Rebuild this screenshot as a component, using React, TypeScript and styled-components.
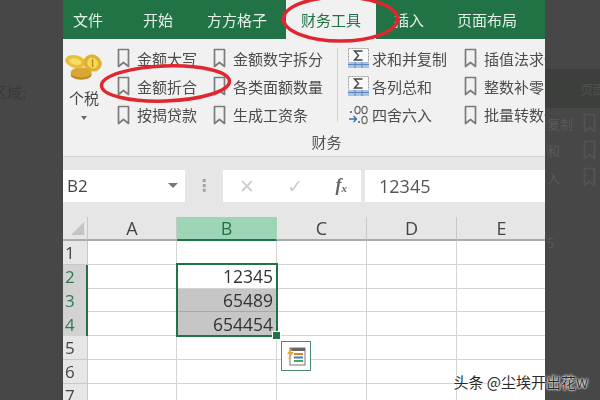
import styled, {createGlobalStyle} from 'styled-components';

const TABS = [
  {label: '文件', gap: 10},
  {label: '开始', gap: 40},
  {label: '方方格子', gap: 34},
  {label: '财务工具', gap: 19},
  {label: '插入', gap: 18},
  {label: '页面布局', gap: 33},
];
const COLUMNS = ['A', 'B', 'C', 'D', 'E'];
const ROWS = [1, 2, 3, 4, 5, 6, 7];
const VALUES: Record<number, string> = {2: '12345', 3: '65489', 4: '654454'};

const GlobalStyle = createGlobalStyle`
  html, body {
    margin: 0;
    padding: 0;
    width: 600px;
    height: 400px;
    overflow: hidden;
    background: #474747;
    font-family: "Noto Sans CJK SC", "Liberation Sans", sans-serif;
  }
`;

function Bookmark({color = '#7b7b7b'}: {color?: string}) {
  return (
    <svg width="13" height="20" viewBox="0 0 13 20" fill="none" style={{flexShrink: 0}}>
      <path d="M1.5 1.5h10v17l-5-4-5 4z" stroke={color} strokeWidth="1.7" strokeLinejoin="round" />
    </svg>
  );
}

function SigmaIcon() {
  return (
    <svg width="21" height="20" viewBox="0 0 21 20" style={{flexShrink: 0}}>
      <rect x="0.5" y="0.5" width="20" height="19" fill="#f8f8f8" stroke="#9a9a9a" strokeDasharray="2 1" />
      <rect x="0" y="14" width="21" height="6" fill="#a9c3e0" />
      <path d="M0 16.5h21M7 14v6M14 14v6" stroke="#5b87bd" strokeWidth="1" />
      <path d="M14.5 3H6.5l4 4.5-4 4.5h8" fill="none" stroke="#444" strokeWidth="1.4" />
    </svg>
  );
}

function RoundIcon() {
  return (
    <svg width="21" height="20" viewBox="0 0 21 20" style={{flexShrink: 0}}>
      <circle cx="3" cy="7" r="1" fill="#555" />
      <ellipse cx="9.5" cy="5" rx="2.6" ry="3.6" fill="none" stroke="#666" strokeWidth="1.2" />
      <ellipse cx="16.5" cy="5" rx="2.6" ry="3.6" fill="none" stroke="#666" strokeWidth="1.2" />
      <circle cx="11" cy="17" r="1" fill="#555" />
      <ellipse cx="16.5" cy="15" rx="2.6" ry="3.6" fill="none" stroke="#666" strokeWidth="1.2" />
      <path d="M1 14h7M5.5 11l3 3-3 3" fill="none" stroke="#2f75b5" strokeWidth="1.4" />
    </svg>
  );
}

function Coins() {
  return (
    <svg width="40" height="28" viewBox="0 0 42 36" preserveAspectRatio="none">
      <ellipse cx="18" cy="28" rx="11" ry="6.5" fill="#b98a22" />
      <ellipse cx="18" cy="25" rx="11" ry="6.5" fill="#d8a734" />
      <ellipse cx="12" cy="11" rx="11" ry="8" fill="#e8bf3c" transform="rotate(20 12 11)" />
      <ellipse cx="12" cy="11" rx="6.5" ry="4" fill="#f6dc6a" transform="rotate(20 12 11)" />
      <ellipse cx="30" cy="13" rx="9.5" ry="11" fill="#e0b030" transform="rotate(-15 30 13)" />
      <ellipse cx="30" cy="13" rx="5.5" ry="7" fill="#f5d858" transform="rotate(-15 30 13)" />
      <path d="M30 8v10" stroke="#b98a22" strokeWidth="1.5" />
    </svg>
  );
}

function FlashFill() {
  return (
    <svg width="20" height="20" viewBox="0 0 20 20">
      <rect x="4" y="2" width="15" height="17" fill="#fff" stroke="#777" />
      <rect x="4" y="2" width="15" height="3" fill="#666" />
      <path d="M8 8h9" stroke="#d9862b" strokeWidth="2" />
      <path d="M8 11.500h9" stroke="#3d7fc4" strokeWidth="2" />
      <path d="M8 15h9" stroke="#4aa564" strokeWidth="2" />
      <path d="M6 1L1 8h3l-2 6 6-8H5z" fill="#f0a630" />
    </svg>
  );
}

export default function App() {
  return (
    <Page>
      <GlobalStyle />
      <LeftDim>区域;</LeftDim>

      <Excel>
        <TabBar>
          {TABS.map((tab, i) => (
            <Tab key={tab.label} $active={i === 3} $gap={tab.gap}>
              {tab.label}
            </Tab>
          ))}
        </TabBar>

        <Ribbon>
          <RibbonBody>
            <TaxButton>
              <Coins />
              <TaxLabel>个税</TaxLabel>
              <Caret />
            </TaxButton>
            <ToolColumn $width={96}>
              <Tool><Bookmark /><ToolText>金额大写</ToolText></Tool>
              <Tool><Bookmark /><ToolText>金额折合</ToolText></Tool>
              <Tool><Bookmark /><ToolText>按揭贷款</ToolText></Tool>
            </ToolColumn>
            <ToolColumn $width={123}>
              <Tool><Bookmark /><ToolText>金额数字拆分</ToolText></Tool>
              <Tool><Bookmark /><ToolText>各类面额数量</ToolText></Tool>
              <Tool><Bookmark /><ToolText>生成工资条</ToolText></Tool>
            </ToolColumn>
            <RibbonDivider />
            <ToolColumn $width={116}>
              <Tool $gap={3}><SigmaIcon /><ToolText>求和并复制</ToolText></Tool>
              <Tool $gap={3}><SigmaIcon /><ToolText>各列总和</ToolText></Tool>
              <Tool $gap={3}><RoundIcon /><ToolText>四舍六入</ToolText></Tool>
            </ToolColumn>
            <ToolColumn $width={82}>
              <Tool><Bookmark /><ToolText>插值法求值</ToolText></Tool>
              <Tool><Bookmark /><ToolText>整数补零</ToolText></Tool>
              <Tool><Bookmark /><ToolText>批量转数值</ToolText></Tool>
            </ToolColumn>
          </RibbonBody>
          <GroupLabel>财务</GroupLabel>
        </Ribbon>

        <FormulaBar>
          <NameBox>
            B2
            <NameCaret />
          </NameBox>
          <Grip>⋮</Grip>
          <FormulaButtons>
            <FormulaGlyph>✕</FormulaGlyph>
            <FormulaGlyph>✓</FormulaGlyph>
            <FxGlyph>f<sub>x</sub></FxGlyph>
          </FormulaButtons>
          <FormulaInput>12345</FormulaInput>
        </FormulaBar>

        <Sheet>
          <Corner><CornerMark /></Corner>
          {COLUMNS.map((col) => (
            <ColumnHead key={col} $selected={col === 'B'}>{col}</ColumnHead>
          ))}
          {ROWS.map((row) => (
            <SheetRow key={row}>
              <RowHead $selected={row >= 2 && row <= 4}>{row}</RowHead>
              {COLUMNS.map((col) => (
                <Cell key={col} $shaded={col === 'B' && (row === 3 || row === 4)}>
                  {col === 'B' ? VALUES[row] : ''}
                </Cell>
              ))}
            </SheetRow>
          ))}
          <Selection><FillHandle /></Selection>
          <QuickButton><FlashFill /></QuickButton>
        </Sheet>
      </Excel>

      <RightDim>
        <DimBand>页面</DimBand>
        <DimRow>复制<Bookmark color="#535353" /></DimRow>
        <DimRow>和<Bookmark color="#535353" /></DimRow>
        <DimRow>入<Bookmark color="#535353" /></DimRow>
        <DimNumber>5</DimNumber>
      </RightDim>

      <Marks width="600" height="400" viewBox="0 0 600 400">
        <ellipse cx="340.500" cy="19" rx="57" ry="22" fill="none" stroke="#e0262e" strokeWidth="3.5" />
        <ellipse cx="165.500" cy="83.500" rx="64" ry="17.500" fill="none" stroke="#e0262e" strokeWidth="3.5" transform="rotate(-2 165 84)" />
      </Marks>
      <Watermark>头条 @尘埃开出花w</Watermark>
    </Page>
  );
}

const Page = styled.div`
  position: relative;
  display: flex;
  width: 600px;
  height: 400px;
  overflow: hidden;
  background: #474747;
`;

const LeftDim = styled.div`
  width: 63px;
  flex-shrink: 0;
  padding-top: 80px;
  text-indent: -8px;
  color: #3a3a3a;
  font-size: 15px;
  line-height: 24px;
  white-space: nowrap;
  overflow: hidden;
  box-sizing: border-box;
`;

const Excel = styled.div`
  width: 482px;
  flex-shrink: 0;
  display: flex;
  flex-direction: column;
  background: #fff;
  filter: blur(0.4px);
`;

const TabBar = styled.div`
  display: flex;
  height: 39px;
  background: #217346;
  flex-shrink: 0;
`;

const Tab = styled.div<{$active: boolean; $gap: number}>`
  margin-left: ${(p) => p.$gap}px;
  padding: 0 ${(p) => (p.$active ? 15 : 0)}px;
  display: flex;
  align-items: center;
  justify-content: center;
  font-size: 15px;
  color: ${(p) => (p.$active ? '#217346' : '#e4f0e9')};
  background: ${(p) => (p.$active ? '#f1f1f1' : 'transparent')};
`;

const Ribbon = styled.div`
  height: 118px;
  flex-shrink: 0;
  background: #f1f1f1;
  border-bottom: 1px solid #d4d4d4;
  box-sizing: border-box;
  overflow: hidden;
`;

const RibbonBody = styled.div`
  display: flex;
  height: 90px;
  padding-top: 5px;
  box-sizing: border-box;
`;

const TaxButton = styled.div`
  width: 54px;
  flex-shrink: 0;
  display: flex;
  flex-direction: column;
  align-items: center;
  padding: 9px 13px 0 1px;
  box-sizing: border-box;
`;

const TaxLabel = styled.div`
  margin-top: 7px;
  font-size: 15px;
  line-height: 20px;
  color: #444;
  white-space: nowrap;
`;

const Caret = styled.div`
  margin-top: 8px;
  width: 0;
  height: 0;
  border-left: 3.5px solid transparent;
  border-right: 3.5px solid transparent;
  border-top: 4px solid #666;
`;

const ToolColumn = styled.div<{$width: number}>`
  width: ${(p) => p.$width}px;
  flex-shrink: 0;
  display: flex;
  flex-direction: column;
  overflow: hidden;
`;

const Tool = styled.div<{$gap?: number}>`
  display: flex;
  align-items: center;
  gap: ${(p) => p.$gap ?? 7}px;
  height: 28.500px;
  white-space: nowrap;
`;

const ToolText = styled.span`
  font-size: 15px;
  color: #4c4c4c;
`;

const RibbonDivider = styled.div`
  width: 1px;
  height: 74px;
  margin: 4px 10px 0 1px;
  background: #d2d2d2;
  flex-shrink: 0;
`;

const GroupLabel = styled.div`
  text-align: center;
  padding-left: 45px;
  font-size: 15px;
  line-height: 20px;
  margin-top: 3px;
  color: #555;
`;

const FormulaBar = styled.div`
  height: 60px;
  flex-shrink: 0;
  display: flex;
  align-items: center;
  background: #e6e6e6;
  padding-bottom: 3px;
  box-sizing: border-box;
`;

const NameBox = styled.div`
  position: relative;
  width: 122px;
  height: 32px;
  flex-shrink: 0;
  background: #fff;
  box-sizing: border-box;
  padding-left: 4px;
  font: 17px/32px "Open Sans", "Liberation Sans", sans-serif;
  color: #444;
`;

const NameCaret = styled.div`
  position: absolute;
  right: 7px;
  top: 13px;
  border-left: 5px solid transparent;
  border-right: 5px solid transparent;
  border-top: 5px solid #777;
`;

const Grip = styled.div`
  width: 38px;
  flex-shrink: 0;
  text-align: center;
  color: #a0a0a0;
  font: bold 16px "DejaVu Sans", sans-serif;
`;

const FormulaButtons = styled.div`
  width: 138px;
  height: 32px;
  flex-shrink: 0;
  background: #fff;
  display: flex;
  align-items: center;
  justify-content: space-between;
  padding: 0 14px 0 16px;
  box-sizing: border-box;
`;

const FormulaGlyph = styled.span`
  font: bold 19px "DejaVu Sans", sans-serif;
  color: #cdcdcd;
`;

const FxGlyph = styled.span`
  font: italic bold 18px "Liberation Serif", serif;
  color: #666;
  sub {
    font-size: 11px;
    vertical-align: -1px;
  }
`;

const FormulaInput = styled.div`
  margin-left: 4px;
  flex: 1;
  height: 32px;
  background: #fff;
  padding-left: 14px;
  font: 18px/32px "Open Sans", "Liberation Sans", sans-serif;
  color: #555;
`;

const Sheet = styled.div`
  position: relative;
  flex: 1;
  display: grid;
  grid-template-columns: 25px 89px 100px 90px 90px 90px;
  grid-template-rows: 24px repeat(7, 23.8px);
  background: #fff;
  overflow: hidden;
`;

const SheetRow = styled.div`
  display: contents;
`;

const Corner = styled.div`
  background: #e6e6e6;
  border-bottom: 2px solid #ababab;
  border-right: 1px solid #c8c8c8;
  box-sizing: border-box;
  position: relative;
`;

const CornerMark = styled.div`
  position: absolute;
  right: 3px;
  bottom: 4px;
  border-left: 13px solid transparent;
  border-bottom: 13px solid #c4c4c4;
`;

const ColumnHead = styled.div<{$selected: boolean}>`
  display: flex;
  align-items: center;
  justify-content: center;
  box-sizing: border-box;
  font: 18px "Open Sans", "Liberation Sans", sans-serif;
  color: ${(p) => (p.$selected ? '#217346' : '#444')};
  background: ${(p) => (p.$selected ? '#9fd5b7' : '#e6e6e6')};
  border-bottom: 2px solid ${(p) => (p.$selected ? '#217346' : '#ababab')};
  border-right: 1px solid ${(p) => (p.$selected ? '#9fd5b7' : '#c8c8c8')};
`;

const RowHead = styled.div<{$selected: boolean}>`
  display: flex;
  align-items: center;
  padding-left: 2px;
  box-sizing: border-box;
  font: 17px "Open Sans", "Liberation Sans", sans-serif;
  color: ${(p) => (p.$selected ? '#2f7a50' : '#444')};
  background: ${(p) => (p.$selected ? '#d2d2d2' : '#e6e6e6')};
  border-right: ${(p) => (p.$selected ? '2px solid #217346' : '1px solid #c8c8c8')};
  border-bottom: ${(p) => (p.$selected ? 'none' : '1px solid #c8c8c8')};
`;

const Cell = styled.div<{$shaded: boolean}>`
  box-sizing: border-box;
  display: flex;
  align-items: center;
  justify-content: flex-end;
  padding-right: 3px;
  font: 17.500px "Open Sans", "Liberation Sans", sans-serif;
  color: #333;
  background: ${(p) => (p.$shaded ? '#c6c6c6' : '#fff')};
  border-right: 1px solid #d4d4d4;
  border-bottom: 1px solid ${(p) => (p.$shaded ? '#a8a8a8' : '#d4d4d4')};
`;

const Selection = styled.div`
  position: absolute;
  left: 113px;
  top: 46px;
  width: 102px;
  height: 74px;
  border: 2px solid #217346;
  box-sizing: border-box;
`;

const FillHandle = styled.div`
  position: absolute;
  right: -5px;
  bottom: -5px;
  width: 7px;
  height: 7px;
  background: #217346;
  border: 1px solid #fff;
`;

const QuickButton = styled.div`
  position: absolute;
  left: 218px;
  top: 124px;
  width: 30px;
  height: 30px;
  box-sizing: border-box;
  border: 1px solid #4f8f70;
  background: #fff;
  display: flex;
  align-items: center;
  justify-content: center;
`;

const RightDim = styled.div`
  flex: 1;
  padding-top: 69px;
  font-size: 13px;
  white-space: nowrap;
  overflow: hidden;
`;

const DimBand = styled.div`
  height: 39px;
  line-height: 39px;
  padding-left: 35px;
  background: #3d3f3d;
  color: #4e504e;
`;

const DimRow = styled.div`
  display: flex;
  justify-content: space-between;
  align-items: center;
  height: 24px;
  margin-top: 3px;
  padding: 0 4px 0 2px;
  color: #595959;
`;

const DimNumber = styled.div`
  margin-top: 44px;
  padding-left: 2px;
  color: #585858;
  line-height: 20px;
`;

const Marks = styled.svg`
  position: absolute;
  left: 0;
  top: 0;
  pointer-events: none;
`;

const Watermark = styled.div`
  position: absolute;
  right: 12px;
  bottom: 8px;
  font-size: 15px;
  line-height: 20px;
  color: #2b2b2b;
  text-shadow: 0 0 2px #fff, 0 0 1px #fff, 0 0 3px #fff;
`;
